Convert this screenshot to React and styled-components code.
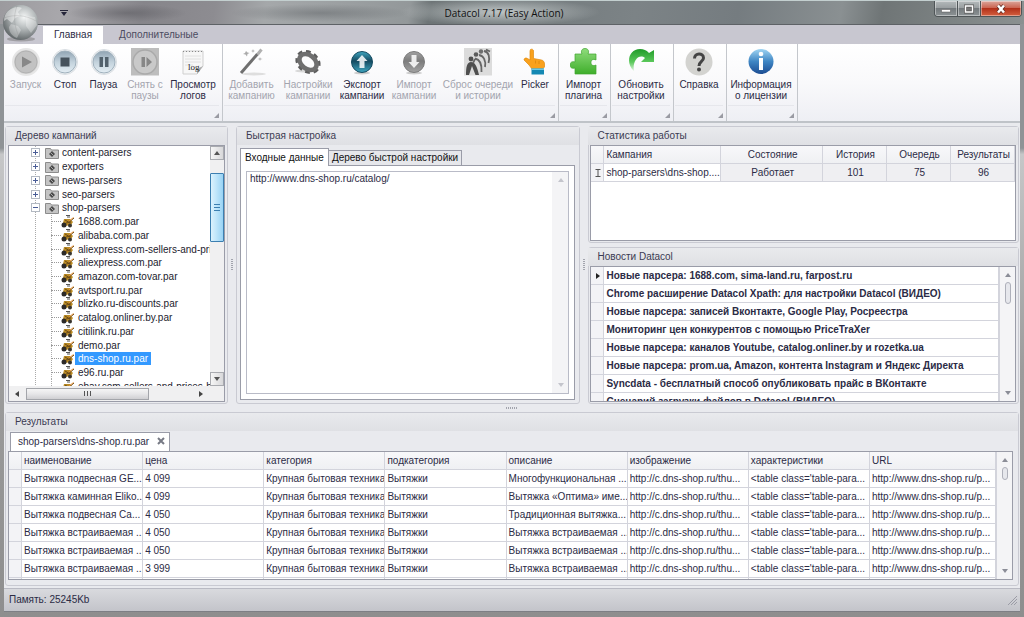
import React, { Fragment } from 'react'
import styled, { createGlobalStyle, css } from 'styled-components'

const FONT = '"Liberation Sans", Arial, sans-serif'

const theme = {
  text: '#2b2b45',
  muted: '#a3a4ae',
  border: '#9a9ca8',
  line: '#d3d4dc',
  panel: '#e9eaee',
  strip: '#c8c7d0',
}

const GlobalStyle = createGlobalStyle`
  * { box-sizing: border-box; }
  body { margin: 0; }
  button { font: inherit; color: inherit; padding: 0; border: 0; background: none; }
  svg { flex: none; }
`

const folders = ['content-parsers', 'exporters', 'news-parsers', 'seo-parsers']

const parsers = [
  '1688.com.par',
  'alibaba.com.par',
  'aliexpress.com-sellers-and-price',
  'aliexpress.com.par',
  'amazon.com-tovar.par',
  'avtsport.ru.par',
  'blizko.ru-discounts.par',
  'catalog.onliner.by.par',
  'citilink.ru.par',
  'demo.par',
  'dns-shop.ru.par',
  'e96.ru.par',
  'ebay.com-sellers-and-prices-by-',
]

const news = [
  'Новые парсера: 1688.com, sima-land.ru, farpost.ru',
  'Chrome расширение Datacol Xpath: для настройки Datacol (ВИДЕО)',
  'Новые парсера: записей Вконтакте, Google Play, Росреестра',
  'Мониторинг цен конкурентов с помощью PriceTraXer',
  'Новые парсера: каналов Youtube, catalog.onliner.by и rozetka.ua',
  'Новые парсера: prom.ua, Amazon, контента Instagram и Яндекс Директа',
  'Syncdata - бесплатный способ опубликовать прайс в ВКонтакте',
  'Сценарий загрузки файлов в Datacol (ВИДЕО)',
]

const columns = [
  'наименование',
  'цена',
  'категория',
  'подкатегория',
  'описание',
  'изображение',
  'характеристики',
  'URL',
]

const results = [
  ['Вытяжка подвесная GE...', '4 099', 'Многофункциональная ...'],
  ['Вытяжка каминная Eliko...', '4 099', 'Вытяжка «Оптима» име...'],
  ['Вытяжка подвесная Ca...', '4 050', 'Традиционная вытяжка...'],
  ['Вытяжка встраиваемая ...', '4 050', 'Вытяжка встраиваемая ...'],
  ['Вытяжка встраиваемая ...', '4 050', 'Вытяжка встраиваемая ...'],
  ['Вытяжка встраиваемая ...', '3 999', 'Вытяжка встраиваемая ...'],
].map(([name, price, about]) => [
  name,
  price,
  'Крупная бытовая техника',
  'Вытяжки',
  about,
  'http://c.dns-shop.ru/thu...',
  "<table class='table-para...",
  'http://www.dns-shop.ru/p...',
])

// Icons

const Icon = ({ children }) => (
  <svg width="28" height="28" viewBox="0 0 28 28" aria-hidden="true">
    {children}
  </svg>
)

const PlayIcon = () => (
  <Icon>
    <circle cx="14" cy="14" r="13" fill="#d2d2d2" stroke="#e6e6e6" strokeWidth="2" />
    <circle cx="14" cy="14" r="11" fill="#c2c2c2" stroke="#b2b2b2" />
    <path d="M10 8.500L20 14L10 19.500Z" fill="#888" />
  </Icon>
)

const RoundBlue = ({ id, children }) => (
  <Icon>
    <defs>
      <linearGradient id={id} x1="0" y1="0" x2="0" y2="1">
        <stop offset="0" stopColor="#90a4b3" />
        <stop offset="0.5" stopColor="#c3d2dc" />
        <stop offset="1" stopColor="#e4eef4" />
      </linearGradient>
    </defs>
    <circle cx="14" cy="14" r="12.500" fill="#eef1f3" stroke="#d9dee2" />
    <circle cx="14" cy="14" r="11" fill={`url(#${id})`} stroke="#9fb0bc" />
    {children}
  </Icon>
)

const StopIcon = () => (
  <RoundBlue id="stop">
    <rect x="9.500" y="9.500" width="9" height="9" fill="#46525c" />
  </RoundBlue>
)

const PauseIcon = () => (
  <RoundBlue id="pause">
    <path d="M9.500 9h3.500v10h-3.500zM15 9h3.500v10H15z" fill="#52616c" />
  </RoundBlue>
)

const ResumeIcon = () => (
  <Icon>
    <path d="M0 0h28v27.500H0z" fill="#bdbdbd" />
    <circle cx="14" cy="14" r="12" fill="#c9c9c9" stroke="#aaa" strokeWidth="1.500" />
    <path d="M10.500 9H14v10h-3.500zM15.500 9l5.500 5-5.500 5z" fill="#878787" />
  </Icon>
)

const LogIcon = () => (
  <Icon>
    <path d="M4 3h20v15l-6 8H4z" fill="#f7f7f7" stroke="#cfcfcf" />
    <path d="M24 18l-6 8 0-5z" fill="#aaa" />
    <path d="M4 3.500h20" stroke="#888" strokeDasharray="1 2" />
    <path d="M6 8h16M6 11h16M6 14h16M6 17h8" stroke="#e0e0e0" />
    <text x="9" y="22" fontSize="9" fontFamily="Liberation Serif, serif" fill="#222">
      log
    </text>
  </Icon>
)

const WandIcon = () => (
  <Icon>
    <ellipse cx="16" cy="26" rx="12" ry="1.500" fill="#dedede" />
    <path d="M3 25L19.500 6" stroke="#6f6f6f" strokeWidth="3" />
    <path d="M19.500 6.500L23.500 1.500" stroke="#b0b0b0" strokeWidth="3" />
    <path d="M8 3l1.500 1.500L11.500 5 9.500 6 9 8.500 7.500 6.500 5 6l2-1zM15 1l.5 1.500 1.500.5-1.500.5L15 5l-.5-1.500L13 3l1.500-.5zM22 9l.5 1.500 2 .5-2 .5L22 13l-.5-1.500-2-.5 2-.5z" fill="#aaa" />
  </Icon>
)

const GearIcon = () => (
  <Icon>
    <ellipse cx="9" cy="23" rx="8" ry="1.500" fill="#d8d8d8" />
    <g transform="rotate(38 14 14)">
      <ellipse cx="14" cy="14" rx="11.500" ry="9" fill="none" stroke="#5e5e5e" strokeWidth="4" strokeDasharray="4.500 3.500" />
      <ellipse cx="14" cy="14" rx="9.500" ry="6.800" fill="none" stroke="#6f6f6f" strokeWidth="4.500" />
    </g>
  </Icon>
)

const ArrowIcon = ({ id, light, dark, down }) => (
  <Icon>
    <defs>
      <linearGradient id={id} x1="0" y1="0" x2="0" y2="1">
        <stop offset="0" stopColor={light} />
        <stop offset="0.450" stopColor={dark} />
        <stop offset="1" stopColor={light} />
      </linearGradient>
    </defs>
    <ellipse cx="14" cy="25" rx="8" ry="1.500" fill="#ccc" />
    <circle cx="14" cy="14" r="10.500" fill={`url(#${id})`} stroke={dark} />
    <path
      d="M14 7l5.500 6H16.500v7h-5v-7H8.500z"
      fill="#fff"
      opacity="0.85"
      transform={down ? 'rotate(180 14 13.5)' : undefined}
    />
  </Icon>
)

const QueueIcon = () => (
  <Icon>
    <path d="M0 0h28v27.500H0z" fill="#dcdcdc" />
    <circle cx="7" cy="11" r="2.400" fill="#4f4f4f" />
    <circle cx="12" cy="6.500" r="2.300" fill="#5c5c5c" />
    <circle cx="17" cy="3.500" r="2.200" fill="#6d6d6d" />
    <path d="M2 27c0-8 1-13 5-13s6 4 8 13h-3.500L8 18l-3 9z" fill="#4f4f4f" />
    <path
      d="M11 10.500c5 1 7 6 6.500 13.500M15 7c5 1 7 6 6 12M20 3c5 1 6 6 4.500 12M11 11l-2 4M22 1.500l4 2"
      stroke="#666"
      strokeWidth="1.800"
      fill="none"
    />
  </Icon>
)

const PickerIcon = () => (
  <Icon>
    <path
      d="M9.500 1.500c1.500-.8 3 0 3 1.500v7.500l8 1.500c2 .5 3 2 3 4v3l-2 2H11l-3-4-5-5c0-2 2-2.500 3.500-1.500L9 12V3z"
      fill="#f9a11d"
      stroke="#e08b10"
      strokeWidth="0.700"
    />
    <path d="M14.500 12.500v3M18 13v3" stroke="#e08b10" />
    <path d="M10.500 20.500h12.500v6H10.500z" fill="#1488b3" />
    <path d="M10.500 20.500h12.500v1.500H10.500z" fill="#6dc8e6" />
  </Icon>
)

const PuzzleIcon = () => (
  <Icon>
    <defs>
      <linearGradient id="puzzle" x1="0" y1="0" x2="0" y2="1">
        <stop offset="0" stopColor="#8fdc7c" />
        <stop offset="1" stopColor="#3fae2b" />
      </linearGradient>
    </defs>
    <path
      d="M5 6h7c-1.500-3 0-5.500 3-5.500S19.500 3 18 6h8v6c-3-1.500-5 0-5 2.500s2 4 5 2.500v9H5v-6c-3 1-5-.5-5-3s2-4 5-3z"
      fill="url(#puzzle)"
      stroke="#3fa52f"
      strokeWidth="0.700"
    />
  </Icon>
)

const RefreshIcon = () => (
  <Icon>
    <defs>
      <linearGradient id="refresh" x1="0" y1="0" x2="0" y2="1">
        <stop offset="0" stopColor="#1f9a28" />
        <stop offset="0.600" stopColor="#5cc95c" />
        <stop offset="1" stopColor="#dff5df" />
      </linearGradient>
    </defs>
    <path d="M7 23C-2 15 2 1 13 1c4 0 6 1 9 4l5-3v12H14l4-4c-6-5-13 3-11 13z" fill="url(#refresh)" />
  </Icon>
)

const HelpIcon = () => (
  <Icon>
    <circle cx="14" cy="14" r="13.500" fill="#d3d3d0" />
    <path d="M9.500 10.500c0-6 9-6 9-.5 0 3.500-4.500 3.500-4.500 8" fill="none" stroke="#444" strokeWidth="3" />
    <circle cx="14" cy="21.500" r="2" fill="#444" />
  </Icon>
)

const InfoIcon = () => (
  <Icon>
    <defs>
      <linearGradient id="info" x1="0" y1="0" x2="0" y2="1">
        <stop offset="0" stopColor="#9fd4f2" />
        <stop offset="0.500" stopColor="#3f86c4" />
        <stop offset="1" stopColor="#1c4c92" />
      </linearGradient>
    </defs>
    <circle cx="14" cy="13.500" r="12.500" fill="url(#info)" />
    <circle cx="14" cy="6" r="2.300" fill="#fff" />
    <path d="M12 10h4v12h-4z" fill="#fff" />
  </Icon>
)

const FolderIcon = () => (
  <svg width="14" height="12" viewBox="0 0 14 12" aria-hidden="true">
    <path d="M0.500 1.500h5l1 1.500h7v8.500h-13z" fill="#c4c4c4" stroke="#8c8c8c" />
    <path d="M7 4l3 3-3 3-3-3z" fill="#4a4a4a" />
    <path d="M5.500 5.500l3 3" stroke="#aaa" />
  </svg>
)

const ParserIcon = () => (
  <svg width="14" height="13" viewBox="0 0 14 13" aria-hidden="true">
    <path d="M5 0.500h4M6 2h3" stroke="#555" />
    <path d="M3 4h6l3 3-2 3-6 1-2-3z" fill="#b98a24" />
    <path d="M13 3L7 8M4 5l5 3M5 8l5-1" stroke="#6a4a18" />
    <path d="M12.500 2.500L8 6" stroke="#e8943a" />
    <circle cx="3" cy="10" r="2.500" fill="#2c2a28" />
    <circle cx="9" cy="10.500" r="2" fill="#38342e" />
  </svg>
)

const OrbIcon = () => (
  <svg width="38" height="38" viewBox="0 0 38 38" aria-hidden="true">
    <defs>
      <radialGradient id="orb" cx="0.600" cy="0.350" r="0.650">
        <stop offset="0" stopColor="#f4f6f6" />
        <stop offset="0.500" stopColor="#b5babb" />
        <stop offset="1" stopColor="#666c6e" />
      </radialGradient>
    </defs>
    <ellipse cx="19" cy="35" rx="14" ry="2.500" fill="#777" opacity="0.500" />
    <circle cx="18.500" cy="18.500" r="17.500" fill="url(#orb)" />
    <path d="M6 7c5-4 10-5 14-3l-4 4 2 4-5 2-3 5-5-4-3 2c0-4 1-7 4-10z" fill="#fff" opacity="0.450" />
    <path d="M9 20l7 2 3 4-4 8c-5-2-8-6-8-11zM24 12l9 1 2 8-6 8-5-7z" fill="#fff" opacity="0.300" />
    <path d="M2 14c10-4 22-3 32 3M15 2c-4 10-3 22 3 32" stroke="#777" fill="none" opacity="0.200" />
  </svg>
)

const Triangle = ({ dir = 'up', color = '#8b8d97' }) => (
  <svg width="6" height="6" viewBox="0 0 6 6" aria-hidden="true">
    <path
      d={
        {
          up: 'M0 5l3-4 3 4z',
          down: 'M0 1l3 4 3-4z',
          left: 'M5 0L1 3l4 3z',
          right: 'M1 0l4 3-4 3z',
        }[dir]
      }
      fill={color}
    />
  </svg>
)

const ribbon = [
  [
    { w: 41, label: ['Запуск'], icon: <PlayIcon />, off: true },
    { w: 38, label: ['Стоп'], icon: <StopIcon /> },
    { w: 39, label: ['Пауза'], icon: <PauseIcon /> },
    { w: 44, label: ['Снять с', 'паузы'], icon: <ResumeIcon />, off: true },
    { w: 52, label: ['Просмотр', 'логов'], icon: <LogIcon /> },
  ],
  [
    { w: 55, label: ['Добавить', 'кампанию'], icon: <WandIcon />, off: true },
    { w: 58, label: ['Настройки', 'кампании'], icon: <GearIcon />, off: true },
    {
      w: 50,
      label: ['Экспорт', 'кампании'],
      icon: <ArrowIcon id="export" dark="#154a60" light="#3fa6c0" />,
    },
    {
      w: 54,
      label: ['Импорт', 'кампании'],
      icon: <ArrowIcon id="import" dark="#7c7c7c" light="#a2a2a2" down />,
      off: true,
    },
    { w: 74, label: ['Сброс очереди', 'и истории'], icon: <QueueIcon />, off: true },
    { w: 40, label: ['Picker'], icon: <PickerIcon /> },
  ],
  [{ w: 47, label: ['Импорт', 'плагина'], icon: <PuzzleIcon /> }],
  [{ w: 58, label: ['Обновить', 'настройки'], icon: <RefreshIcon /> }],
  [{ w: 48, label: ['Справка'], icon: <HelpIcon /> }],
  [{ w: 66, label: ['Информация', 'о лицензии'], icon: <InfoIcon /> }],
]

const App = () => (
  <Fragment>
    <GlobalStyle />
    <Frame>
      <TitleBar>
        <QuickMenu aria-label="Панель быстрого доступа">
          <svg width="8" height="6" viewBox="0 0 8 6" aria-hidden="true">
            <path d="M0 0h8v1H0zM1 2h6L4 6z" fill="#26263a" />
          </svg>
        </QuickMenu>
        <Title>Datacol 7.17 (Easy Action)</Title>
        <WindowButtons>
          <WindowButton aria-label="Свернуть">
            <svg width="12" height="10" viewBox="0 0 12 10" aria-hidden="true">
              <path d="M1.500 5.500h9v2.500h-9z" fill="#fff" stroke="#555" strokeWidth="0.500" />
            </svg>
          </WindowButton>
          <WindowButton aria-label="Развернуть">
            <svg width="12" height="10" viewBox="0 0 12 10" aria-hidden="true">
              <path d="M2.500 2h7v6h-7z" fill="#777" stroke="#555" strokeWidth="3" />
              <path d="M2.500 2h7v6h-7z" fill="none" stroke="#fff" strokeWidth="1.500" />
            </svg>
          </WindowButton>
          <WindowButton $close aria-label="Закрыть">
            <svg width="12" height="10" viewBox="0 0 12 10" aria-hidden="true">
              <path d="M3 1.500l6 7M9 1.500l-6 7" stroke="#5d2a22" strokeWidth="4" />
              <path d="M3 1.500l6 7M9 1.500l-6 7" stroke="#fff" strokeWidth="2.500" />
            </svg>
          </WindowButton>
        </WindowButtons>
      </TitleBar>
      <Orb aria-label="Меню Datacol">
        <OrbIcon />
      </Orb>
      <Client>
        <RibbonTabs>
          <RibbonTab $active>Главная</RibbonTab>
          <RibbonTab>Дополнительные</RibbonTab>
        </RibbonTabs>
        <Ribbon>
          {ribbon.map((group, i) => (
            <Group key={i}>
              <GroupButtons>
                {group.map(({ w, label, icon, off }) => (
                  <Tool key={label.join(' ')} $width={w} disabled={off}>
                    {icon}
                    <ToolLabel>
                      {label.map(line => (
                        <span key={line}>{line}</span>
                      ))}
                    </ToolLabel>
                  </Tool>
                ))}
              </GroupButtons>
              <GroupFooter>
                <svg width="5" height="5" viewBox="0 0 5 5" aria-hidden="true">
                  <path d="M5 0v5H0z" fill="#9a9ba3" />
                </svg>
              </GroupFooter>
            </Group>
          ))}
        </Ribbon>
        <Main>
          <Top>
            <TreePanel />
            <Splitter />
            <QuickPanel />
            <Splitter />
            <Side>
              <StatsPanel />
              <NewsPanel />
            </Side>
          </Top>
          <Splitter $horizontal />
          <ResultsPanel />
        </Main>
        <StatusBar>
          Память: 25245Kb
          <svg width="10" height="10" viewBox="0 0 10 10" aria-hidden="true">
            <path d="M1 10l9-9M4 10l6-6M7 10l3-3" stroke="#9b9ca6" />
          </svg>
        </StatusBar>
      </Client>
    </Frame>
  </Fragment>
)

const TreePanel = () => (
  <Panel>
    <PanelTitle>Дерево кампаний</PanelTitle>
    <Inset>
      <TreeBody>
        <TreeScroll>
          <Tree>
            {folders.map(name => (
              <Folder key={name}>
                <Expander aria-label={`Раскрыть ${name}`}>
                  <ExpanderIcon closed />
                </Expander>
                <FolderIcon />
                <Label>{name}</Label>
              </Folder>
            ))}
            <Folder>
              <Expander aria-label="Свернуть shop-parsers">
                <ExpanderIcon />
              </Expander>
              <FolderIcon />
              <Label>shop-parsers</Label>
            </Folder>
            {parsers.map(name => (
              <Leaf key={name}>
                <ParserIcon />
                <Label $selected={name === 'dns-shop.ru.par'}>{name}</Label>
              </Leaf>
            ))}
          </Tree>
        </TreeScroll>
        <TreeBar>
          <BarButton aria-label="Вверх">
            <Triangle color="#555" />
          </BarButton>
          <TreeThumb />
          <BarButton aria-label="Вниз">
            <Triangle dir="down" color="#555" />
          </BarButton>
        </TreeBar>
      </TreeBody>
      <TreeFoot>
        <Triangle dir="left" color="#444" />
        <FootThumb />
        <Triangle dir="right" color="#444" />
      </TreeFoot>
    </Inset>
  </Panel>
)

const ExpanderIcon = ({ closed }) => (
  <svg width="7" height="7" viewBox="0 0 7 7" aria-hidden="true">
    <path d={closed ? 'M1 3.500h5M3.500 1v5' : 'M1 3.500h5'} stroke="#4a5d96" />
  </svg>
)

const QuickPanel = () => (
  <Panel>
    <PanelTitle>Быстрая настройка</PanelTitle>
    <PageTabs>
      <PageTab $active>Входные данные</PageTab>
      <PageTab>Дерево быстрой настройки</PageTab>
    </PageTabs>
    <Page>
      <InputBox>
        <Urls
          aria-label="Входные данные"
          spellCheck="false"
          defaultValue="http://www.dns-shop.ru/catalog/"
        />
        <SideBar $faint>
          <Triangle color="#c4c5cc" />
          <Triangle dir="down" color="#c4c5cc" />
        </SideBar>
      </InputBox>
    </Page>
  </Panel>
)

const StatsPanel = () => (
  <SidePanel>
    <PanelTitle>Статистика работы</PanelTitle>
    <Inset>
      <Grid>
        <colgroup>
          <Col $width={13} />
          <Col $width={117} />
          <Col />
          <Col $width={64} />
          <Col $width={64} />
          <Col $width={64} />
        </colgroup>
        <thead>
          <tr>
            <Th />
            <Th>Кампания</Th>
            <Th $center>Состояние</Th>
            <Th $center>История</Th>
            <Th $center>Очередь</Th>
            <Th $center>Результаты</Th>
          </tr>
        </thead>
        <tbody>
          <tr>
            <Marker>
              <svg width="6" height="8" viewBox="0 0 6 8" aria-hidden="true">
                <path d="M0.500 0.500h5M0.500 7.500h5M3 0.500v7" stroke="#555" fill="none" />
              </svg>
            </Marker>
            <Td>shop-parsers\dns-shop....</Td>
            <Td $center $grey>Работает</Td>
            <Td $center $grey>101</Td>
            <Td $center $grey>75</Td>
            <Td $center $grey>96</Td>
          </tr>
        </tbody>
      </Grid>
    </Inset>
  </SidePanel>
)

const NewsPanel = () => (
  <SidePanel>
    <PanelTitle>Новости Datacol</PanelTitle>
    <Inset>
      <Scroller>
        <GridClip>
          <Grid>
            <colgroup>
              <Col $width={13} />
              <Col />
            </colgroup>
            <tbody>
              {news.map((title, i) => (
                <tr key={title}>
                  <Marker>{i === 0 && <Triangle dir="right" color="#222" />}</Marker>
                  <Td $bold>{title}</Td>
                </tr>
              ))}
            </tbody>
          </Grid>
        </GridClip>
        <SideBar>
          <Triangle />
          <SideThumb $height={22} />
          <Triangle dir="down" />
        </SideBar>
      </Scroller>
    </Inset>
  </SidePanel>
)

const ResultsPanel = () => (
  <ResultsBox>
    <PanelTitle>Результаты</PanelTitle>
    <ResultTabs>
      <ResultTab>
        <button>shop-parsers\dns-shop.ru.par</button>
        <button aria-label="Закрыть вкладку">
          <svg width="8" height="8" viewBox="0 0 8 8" aria-hidden="true">
            <path d="M1 1l6 6M7 1L1 7" stroke="#777a85" strokeWidth="2" />
          </svg>
        </button>
      </ResultTab>
    </ResultTabs>
    <Inset>
      <Scroller>
        <GridClip>
          <Grid>
            <colgroup>
              <Col $width={13} />
              {columns.map((name, i) => (
                <Col key={name} $width={i === columns.length - 1 ? 126 : undefined} />
              ))}
            </colgroup>
            <thead>
              <tr>
                <Th />
                {columns.map(name => (
                  <Th key={name}>{name}</Th>
                ))}
              </tr>
            </thead>
            <tbody>
              {results.map((row, i) => (
                <tr key={i}>
                  <Marker />
                  {row.map((value, j) => (
                    <Td key={j}>{value}</Td>
                  ))}
                </tr>
              ))}
              <tr>
                <Marker />
                {columns.map(name => (
                  <Td key={name} />
                ))}
              </tr>
            </tbody>
          </Grid>
        </GridClip>
        <SideBar>
          <Triangle />
          <SideThumb $height={13} />
          <Triangle dir="down" />
        </SideBar>
      </Scroller>
    </Inset>
  </ResultsBox>
)

// Window frame

const Frame = styled.div`
  position: relative;
  display: flex;
  flex-direction: column;
  height: 100vh;
  padding: 0 4px 5px;
  overflow: hidden;
  font: 10px/12px ${FONT};
  color: ${theme.text};
  background: linear-gradient(#8f9396, #8f9396 24%, #c6c7c8 25%, #9c9c9c 60%, #8e8e8e);
`

const TitleBar = styled.header`
  flex: none;
  display: flex;
  align-items: center;
  height: 24px;
  margin: 0 -4px;
  border-top: 1px solid #c3cfcf;
  background:
    radial-gradient(60px 9px at 127px 12px, rgba(70, 70, 76, 0.4), transparent),
    radial-gradient(90px 9px at 320px 12px, rgba(80, 84, 88, 0.4), transparent),
    radial-gradient(100px 14px at 500px 11px, rgba(220, 226, 226, 0.7), transparent),
    linear-gradient(
      100deg,
      #9b9a9e 0%,
      #a8a7ab 6%,
      #86858a 14%,
      #8d8c91 21%,
      #a5a8aa 26%,
      #93989a 40%,
      #6d7476 42%,
      #7c8386 62%,
      #757c80 72%,
      #8a9092 82%,
      #6f7576 86%,
      #8b9191 100%
    );
`

const QuickMenu = styled.button`
  display: flex;
  width: 8px;
  margin: 0 6px 0 60px;
`

const Title = styled.h1`
  flex: 1;
  margin: 0;
  font: 10px/14px "Open Sans", sans-serif;
  text-align: center;
  color: #111;
`

const WindowButtons = styled.div`
  display: flex;
  align-self: flex-start;
  margin-right: 2px;
  border: 1px solid #4f5557;
  border-top: 0;
  border-radius: 0 0 4px 4px;
  overflow: hidden;
`

const WindowButton = styled.button`
  display: flex;
  align-items: center;
  justify-content: center;
  width: ${({ $close }) => ($close ? 40 : 23)}px;
  height: 15px;
  border-right: ${({ $close }) => ($close ? 0 : '1px solid #4f5557')};
  box-shadow: inset 0 0 0 1px rgba(255, 255, 255, 0.4);
  background: ${({ $close }) =>
    $close
      ? 'linear-gradient(#dba79c, #cb6552 45%, #b2311a 50%, #d4603f)'
      : 'linear-gradient(#b4babb, #9a9fa1 45%, #747a7d 50%, #8d9395)'};
`

const Orb = styled.button`
  position: absolute;
  z-index: 1;
  top: 4px;
  left: 2px;
  width: 38px;
  height: 38px;
`

const Client = styled.div`
  flex: 1;
  display: flex;
  flex-direction: column;
  min-height: 0;
  border-top: 1px solid #5e6266;
  background: ${theme.panel};
`

// Ribbon

const RibbonTabs = styled.nav`
  flex: none;
  display: flex;
  align-items: flex-end;
  height: 19px;
  padding-left: 39px;
  background: ${theme.strip};
`

const RibbonTab = styled.button`
  height: 18px;
  padding: 0 11px;
  font: 10px/18px ${FONT};
  color: ${({ $active }) => ($active ? theme.text : '#4c4c60')};
  background: ${({ $active }) => ($active ? '#fff' : 'none')};

  & + & {
    padding: 0 16px;
  }
`

const Ribbon = styled.div`
  flex: none;
  display: flex;
  height: 79px;
  border-bottom: 2px solid #bfc3c8;
  background: linear-gradient(#fff, #f9f9fb 50%, #eeeff4);
`

const Group = styled.div`
  display: flex;
  flex-direction: column;
  padding: 0 3px 0 1px;
  border-right: 1px solid #c4c7cc;
`

const GroupButtons = styled.div`
  flex: 1;
  display: flex;
  border-bottom: 1px solid #e6e7ec;
`

const GroupFooter = styled.div`
  display: flex;
  align-items: flex-end;
  justify-content: flex-end;
  height: 15px;
  padding-bottom: 3px;
`

const Tool = styled.button`
  display: flex;
  flex-direction: column;
  align-items: center;
  width: ${({ $width }) => $width}px;
  padding-top: 4px;
  color: ${theme.text};

  &:disabled {
    color: ${theme.muted};
  }
`

const ToolLabel = styled.span`
  display: flex;
  flex-direction: column;
  align-items: center;
  margin-top: 3px;
  font: 10px/11px ${FONT};
  white-space: nowrap;
`

// Panels

const Main = styled.main`
  flex: 1;
  display: grid;
  grid-template-rows: minmax(0, 8fr) 8px minmax(0, 5fr);
  min-height: 0;
  padding: 3px 1px 2px;
`

const Top = styled.div`
  display: grid;
  grid-template-columns: 223px 8px minmax(0, 4fr) 8px minmax(0, 5fr);
`

const Side = styled.div`
  display: grid;
  grid-template-rows: minmax(0, 3fr) minmax(0, 4fr);
  gap: 4px;
  min-height: 0;
`

const Splitter = styled.div`
  display: flex;
  align-items: center;
  justify-content: center;

  &::before {
    content: '';
    width: ${({ $horizontal }) => ($horizontal ? 12 : 2)}px;
    height: ${({ $horizontal }) => ($horizontal ? 2 : 12)}px;
    background: repeating-linear-gradient(
      ${({ $horizontal }) => ($horizontal ? '90deg' : '180deg')},
      #a2a4ad 0 1px,
      transparent 1px 2px
    );
  }
`

const Panel = styled.section`
  display: flex;
  flex-direction: column;
  min-width: 0;
  min-height: 0;
  padding: 0 2px 1px;
  border: 1px solid #c9cad2;
  border-radius: 3px;
`

const SidePanel = styled(Panel)`
  padding: 0 2px 1px 1px;
`

const ResultsBox = styled(Panel)`
  padding: 0 5px 5px 2px;
`

const PanelTitle = styled.h2`
  flex: none;
  margin: 0 -2px;
  padding: 0 9px;
  font: 10px/18px ${FONT};
  color: #3b3b52;
  background: linear-gradient(#e9eaed, #dfe0e4);

  ${ResultsBox} > & {
    margin-right: -5px;
  }
`

const Inset = styled.div`
  flex: 1;
  display: flex;
  flex-direction: column;
  min-height: 0;
  overflow: hidden;
  border: 1px solid ${theme.border};
  background: #fff;
`

// Campaign tree

const TreeBody = styled.div`
  flex: 1;
  display: flex;
  min-height: 0;
`

const TreeScroll = styled.div`
  flex: 1;
  min-width: 0;
  overflow: hidden;
`

const Tree = styled.ul`
  display: flex;
  flex-direction: column;
  height: calc(100% + 7px);
  margin: 0;
  padding: 0;
  list-style: none;
  font: 10px/12px ${FONT};
  background: repeating-linear-gradient(#aaa 0 1px, transparent 1px 2px) 26px 0 / 1px 100% no-repeat;
`

const Folder = styled.li`
  flex: 1 1 0;
  display: flex;
  align-items: center;
  padding-left: 22px;
  white-space: nowrap;

  > svg {
    margin-left: 5px;
  }
`

const Expander = styled.button`
  display: flex;
  border: 1px solid #b3b9c2;
  background: #fff;
`

const Leaf = styled.li`
  flex: 1 1 0;
  display: flex;
  align-items: center;
  margin-left: 42px;
  white-space: nowrap;
  background: repeating-linear-gradient(#aaa 0 1px, transparent 1px 2px) 0 0 / 1px 100% no-repeat;

  &::before {
    content: '';
    flex: none;
    width: 10px;
    border-top: 1px dotted #999;
  }
`

const Label = styled.span`
  padding: 0 3px;
  line-height: 13px;
  color: ${({ $selected }) => ($selected ? '#fff' : '#1c1c2e')};
  background: ${({ $selected }) => ($selected ? '#3399ff' : 'none')};
`

const TreeBar = styled.div`
  flex: none;
  display: flex;
  flex-direction: column;
  width: 14px;
  background: #f0f0f1;
`

const BarButton = styled.button`
  display: flex;
  align-items: center;
  justify-content: center;
  height: 14px;
  border: 1px solid #a9abb0;
  background: linear-gradient(90deg, #f6f6f6, #d8d8da);

  &:last-child {
    margin-top: auto;
  }
`

const TreeThumb = styled.div`
  height: 69px;
  margin-top: 13px;
  border: 1px solid #3c7fb1;
  border-radius: 1px;
  background:
    repeating-linear-gradient(#3c7fb1 0 1px, transparent 1px 3px) center / 6px 7px no-repeat,
    linear-gradient(90deg, #dcf2fd, #bfe5fa 45%, #98d3f4);
`

const TreeFoot = styled.div`
  flex: none;
  display: flex;
  align-items: center;
  height: 15px;
  padding: 0 20px 0 5px;
  background: #f0f0f1;
`

const FootThumb = styled.div`
  flex: 0 0 123px;
  height: 12px;
  margin: 0 auto 0 6px;
  border: 1px solid #a3a5aa;
  background:
    repeating-linear-gradient(90deg, #555 0 1px, transparent 1px 3px) center / 7px 5px no-repeat,
    linear-gradient(#f5f5f5, #e6e6e8 50%, #cfcfd2);
`

// Quick setup

const PageTabs = styled.div`
  flex: none;
  display: flex;
  align-items: flex-end;
  height: 20px;
  padding: 0 1px;
`

const PageTab = styled.button`
  position: relative;
  height: ${({ $active }) => ($active ? 18 : 15)}px;
  margin-bottom: ${({ $active }) => ($active ? -1 : 0)}px;
  padding: 0 ${({ $active }) => ($active ? 4 : 3)}px;
  border: 1px solid ${theme.border};
  border-bottom: 0;
  font: 10px/14px ${FONT};
  color: #111;
  background: ${({ $active }) => ($active ? '#fff' : '#e6e7eb')};

  & + & {
    border-left: 0;
  }
`

const Page = styled.div`
  flex: 1;
  display: flex;
  min-height: 0;
  margin: 0 2px 2px 1px;
  padding: 5px;
  border: 1px solid ${theme.border};
  background: #fff;
`

const InputBox = styled.div`
  flex: 1;
  display: flex;
  border: 1px solid #b9bbc7;
`

const Urls = styled.textarea`
  flex: 1;
  min-width: 0;
  margin: 0;
  padding: 1px 3px;
  border: 0;
  outline: 0;
  resize: none;
  font: 10px/12px ${FONT};
  color: ${theme.text};
  background: #fff;
`

// Grids

const Scroller = styled.div`
  flex: 1;
  display: flex;
  min-height: 0;
`

const GridClip = styled.div`
  flex: 1;
  min-width: 0;
  overflow: hidden;
`

const SideBar = styled.div`
  flex: none;
  display: flex;
  flex-direction: column;
  align-items: center;
  width: 16px;
  padding: 5px 0;
  border-left: 1px solid ${({ $faint }) => ($faint ? '#f4f4f6' : theme.line)};
  background: #f4f4f6;

  svg:last-child {
    margin-top: auto;
  }
`

const SideThumb = styled.div`
  width: 6px;
  height: ${({ $height }) => $height}px;
  margin-top: 4px;
  border: 1px solid #aeb0ba;
  border-radius: 3px;
  background: #e6e7ec;
`

const Grid = styled.table`
  width: 100%;
  table-layout: fixed;
  border-collapse: separate;
  border-spacing: 0;
  font: 10px/17px ${FONT};
`

const Col = styled.col`
  width: ${({ $width }) => ($width ? `${$width}px` : 'auto')};
`

const cell = css`
  height: 18px;
  padding: 0 0 0 2px;
  overflow: hidden;
  border-right: 1px solid ${theme.line};
  border-bottom: 1px solid ${theme.line};
  text-align: ${({ $center }) => ($center ? 'center' : 'left')};
  white-space: nowrap;
`

const Th = styled.th`
  ${cell}
  font-weight: 400;
  background: linear-gradient(#f8f8fa, #eff0f3);
`

const Td = styled.td`
  ${cell}
  font-weight: ${({ $bold }) => ($bold ? 700 : 400)};
  background: ${({ $grey }) => ($grey ? '#efeff2' : '#fff')};
`

const Marker = styled.td`
  ${cell}
  text-align: center;
  line-height: 0;
  background: #f3f3f6;
`

const ResultTabs = styled.div`
  flex: none;
  display: flex;
  align-items: flex-end;
  height: 20px;
  padding-left: 2px;
`

const ResultTab = styled.div`
  display: flex;
  align-items: center;
  gap: 8px;
  height: 19px;
  padding: 0 4px 0 7px;
  border: 1px solid ${theme.border};
  border-bottom: 0;
  font: 10px/16px ${FONT};
  background: #fff;
`

const StatusBar = styled.footer`
  flex: none;
  display: flex;
  align-items: center;
  justify-content: space-between;
  height: 24px;
  padding: 0 3px 0 5px;
  border-top: 1px solid #b9bac3;
  border-bottom: 1px solid #7d7f85;
  font: 10px/12px ${FONT};
  background: linear-gradient(#d9dade, #c3c4ca);
`

export default App
